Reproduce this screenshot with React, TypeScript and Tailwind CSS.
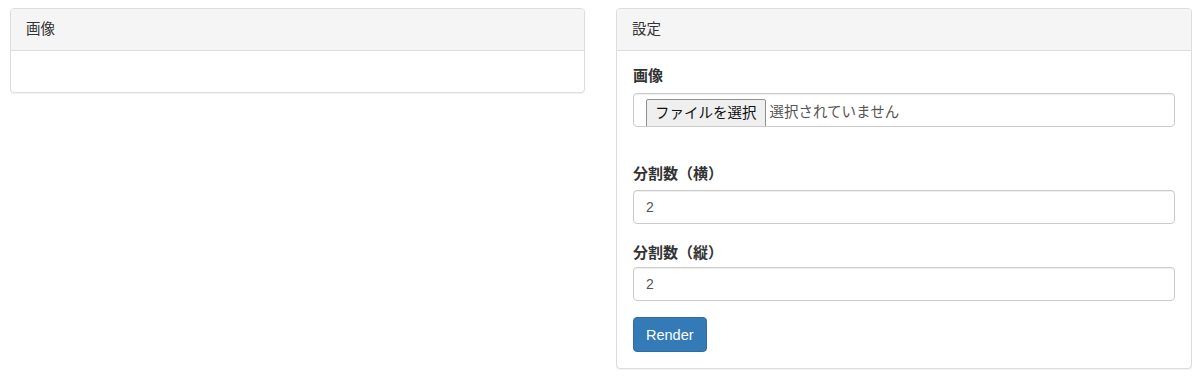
import React from "react";

const font = { fontFamily: '"Liberation Sans", "Noto Sans CJK JP", sans-serif' };

function Panel({ title, width, children }: { title: string; width: string; children: React.ReactNode }) {
  return (
    <div className={`${width} shrink-0 rounded-[4px] border border-[#dddddd] bg-white shadow-[0_1px_1px_rgba(0,0,0,0.05)] self-start`}>
      <div className="h-[42px] flex items-center px-[15px] bg-[#f5f5f5] border-b border-[#dddddd] rounded-t-[3px] text-[14.5px] text-[#333333]">
        {title}
      </div>
      {children}
    </div>
  );
}

export default function App() {
  return (
    <div style={font} className="w-[1200px] h-[378px] bg-white flex gap-[31px] pl-[10px] pt-[8px] text-[#333333]">
      <Panel title="画像" width="w-[575px]">
        <div className="h-[41px]" />
      </Panel>
      <Panel title="設定" width="w-[576px]">
        <div className="px-[16px] pt-[15px] pb-[16px]">
          <div className="h-[20px] leading-[20px] text-[15px] font-bold mb-[7px]">画像</div>
          <div className="h-[34px] rounded-[4px] border border-[#cccccc] shadow-[inset_0_1px_1px_rgba(0,0,0,0.075)] overflow-hidden pl-[12px] pt-[5px] flex items-start">
            <span className="h-[30px] px-[8px] flex items-center border border-[#8f8f8f] rounded-[2px] bg-[#efefef] text-[14.5px] text-[#111111] whitespace-nowrap">
              ファイルを選択
            </span>
            <span className="ml-[4px] h-[28px] flex items-center text-[14.5px] text-[#555555] whitespace-nowrap">
              選択されていません
            </span>
          </div>
          <div className="h-[20px] leading-[20px] text-[15px] font-bold mt-[37px] mb-[6px]">分割数（横）</div>
          <div className="h-[34px] rounded-[4px] border border-[#cccccc] shadow-[inset_0_1px_1px_rgba(0,0,0,0.075)] px-[12px] flex items-center text-[14px] text-[#555555]">
            2
          </div>
          <div className="h-[20px] leading-[20px] text-[15px] font-bold mt-[19px] mb-[4px]">分割数（縦）</div>
          <div className="h-[34px] rounded-[4px] border border-[#cccccc] shadow-[inset_0_1px_1px_rgba(0,0,0,0.075)] px-[12px] flex items-center text-[14px] text-[#555555]">
            2
          </div>
          <button className="mt-[16px] h-[35px] px-[12px] rounded-[4px] border border-[#2e6da4] bg-[#337ab7] text-white text-[14.5px] leading-[20px]">
            Render
          </button>
        </div>
      </Panel>
    </div>
  );
}
